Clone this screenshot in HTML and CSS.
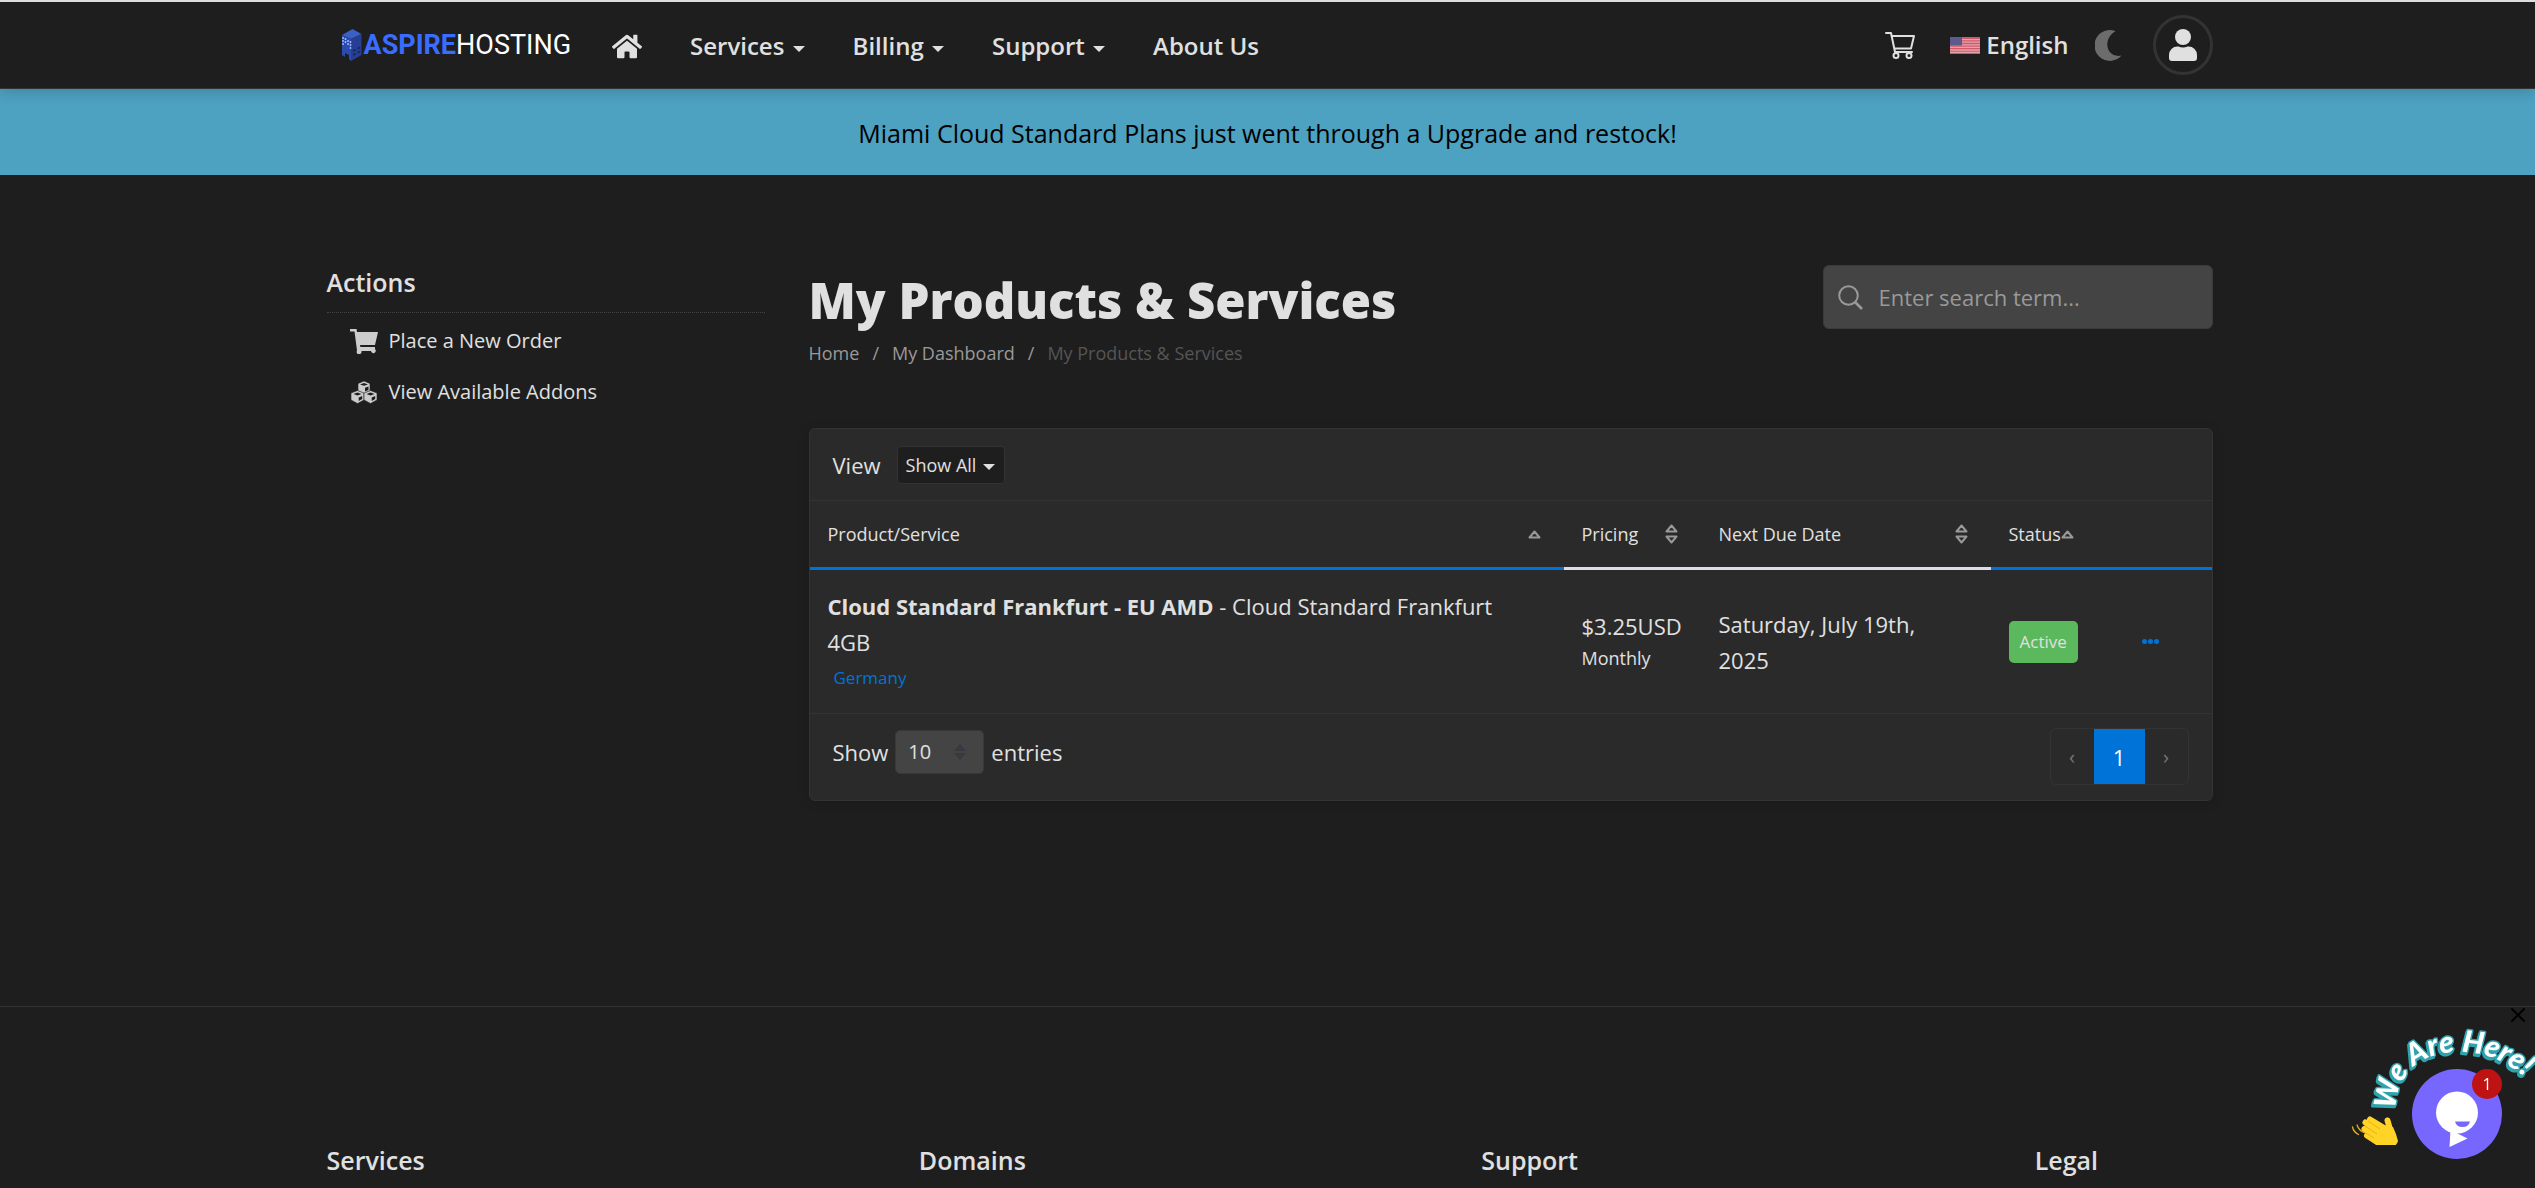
FILE: index.html
```html
<!DOCTYPE html>
<html lang="en">
<head>
  <meta charset="UTF-8" />
  <meta name="viewport" content="width=device-width, initial-scale=1.0" />
  <title>My Products &amp; Services - AspireHosting</title>
  <link rel="stylesheet" href="styles.css">
</head>
<body>
  <header class="navbar">
    <div class="container navbar-inner">
      <a class="logo" href="#">
        <svg class="logo-mark" viewBox="0 0 20 32" aria-hidden="true">
          <path fill="#3a60c8" d="M10.500 0 19.500 5 9 10 0 6z" />
          <path fill="#2b4bb0" d="M0 6 9 10V32L7 30V26L3 24V28L0 26z" />
          <path fill="#263f94" d="M9 10 19.500 5V26L9 32z" />
          <path stroke="#9fb6f2" stroke-width="1.500" stroke-dasharray="2 1" fill="none" d="M1 8v8M3.500 9v5M6 11v5M8.500 12v9" />
          <path stroke="#16265c" stroke-width="1.500" stroke-dasharray="3 2" fill="none" d="M11 22l8-4M11 26l8-4" />
        </svg>
        <span class="logo-blue">ASPIRE</span><span class="logo-white">HOSTING</span>
      </a>
      <nav class="main-nav">
        <a class="nav-home" href="#" aria-label="Home">
          <svg viewBox="0 0 576 512" width="30" height="27"><path fill="currentColor" d="M280.400 148.300 96 300.100V464a16 16 0 0 0 16 16l112-.300a16 16 0 0 0 16-16V368a16 16 0 0 1 16-16h64a16 16 0 0 1 16 16v95.600a16 16 0 0 0 16 16.100l112 .300a16 16 0 0 0 16-16V300L295.700 148.300a12.200 12.200 0 0 0-15.300 0zM571.600 251.500 488 182.600V44a12 12 0 0 0-12-12h-56a12 12 0 0 0-12 12v72.600L318.500 43a48 48 0 0 0-61 0L4.300 251.500a12 12 0 0 0-1.600 16.900l25.500 31a12 12 0 0 0 16.900 1.600l235.300-193.700a12.200 12.200 0 0 1 15.300 0L531 301a12 12 0 0 0 16.900-1.600l25.500-31a12 12 0 0 0-1.800-16.900z" /></svg>
        </a>
        <a href="#">Services <span class="caret"></span></a>
        <a href="#">Billing <span class="caret"></span></a>
        <a href="#">Support <span class="caret"></span></a>
        <a href="#">About Us</a>
      </nav>
      <div class="nav-tools">
        <a class="tool-cart" href="#" aria-label="Cart">
          <svg viewBox="0 0 30 28" width="30" height="28" fill="none" stroke="currentColor" stroke-width="2" stroke-linejoin="round" stroke-linecap="round"><path d="M1 2h5l4 19h17M7 5h22l-3 12.500H9.500" /><circle cx="11" cy="24.500" r="2.500" /><circle cx="24" cy="24.500" r="2.500" /></svg>
        </a>
        <a class="tool-lang" href="#">
          <svg viewBox="0 0 30 17" width="30" height="17" aria-hidden="true"><path fill="#cf5a6a" d="M0 0h30v17H0z" /><path stroke="#e6a3ac" stroke-width="1.300" d="M0 2.600h30M0 5.200h30M0 7.800h30M0 10.400h30M0 13h30M0 15.400h30" /><path fill="#5d5b8c" d="M0 0h12v8.500H0z" /></svg>
          English
        </a>
        <button class="tool-moon" type="button" aria-label="Toggle dark mode">
          <svg viewBox="0 0 27 31" width="27" height="31"><path fill="currentColor" d="M20.500 1.200A15.400 15.400 0 1 0 26.500 25.600C11 28.500 7 9 20.500 1.200z" /></svg>
        </button>
        <a class="avatar" href="#" aria-label="Account">
          <svg viewBox="0 0 28 32" width="28" height="32"><circle cx="14" cy="8" r="8" fill="currentColor" /><path fill="currentColor" d="M0 26a8.400 8.400 0 0 1 8.400-8.400h1q4.600 2 9.200 0h1A8.400 8.400 0 0 1 28 26v3a3 3 0 0 1-3 3H3a3 3 0 0 1-3-3z" /></svg>
        </a>
      </div>
    </div>
  </header>

  <div class="notice">Miami Cloud Standard Plans just went through a Upgrade and restock!</div>

  <div class="container layout">
    <aside class="sidebar">
      <h2>Actions</h2>
      <ul>
        <li><a href="#">
          <svg viewBox="0 0 28 25" width="28" height="25" aria-hidden="true"><path fill="currentColor" d="M0 0h6.500l.600 3H28l-3 13H10l.400 2H25v2.200h.200A2.400 2.400 0 1 1 21 22H11.500A2.500 2.500 0 1 1 7 21.500L4.500 2.500H0z" /></svg>
          Place a New Order</a></li>
        <li><a href="#">
          <svg viewBox="0 0 28 24" width="28" height="24" aria-hidden="true"><g fill="currentColor" stroke="#1e1e1e" stroke-width="0.600"><path d="M14 1l6 2.500v7.500l-6 3-6-3V3.500z" /><path d="M7.500 10.500l6.500 2.500V20l-6.500 3.500L1 20v-7z" /><path d="M20.500 10.500l6.500 2.500V20l-6.500 3.500L14 20v-7z" /></g><g fill="#1e1e1e"><path d="M14 3l4 1.400-4 1.400-4-1.400zM15 7.800l3.500-1.400v3.600L15 11.600zM7.500 12.600l4 1.400-4 1.400-4-1.400zM8.700 17.400l3.500-1.400v3L8.700 21zM20.500 12.600l4 1.400-4 1.400-4-1.400zM21.700 17.400l3.500-1.400v3l-3.500 2z" /></g></svg>
          View Available Addons</a></li>
      </ul>
    </aside>

    <main class="content">
      <div class="page-head">
        <div>
          <h1>My Products &amp; Services</h1>
          <ol class="breadcrumb">
            <li><a href="#">Home</a></li>
            <li><a href="#">My Dashboard</a></li>
            <li class="current">My Products &amp; Services</li>
          </ol>
        </div>
        <label class="search">
          <svg viewBox="0 0 25 25" width="25" height="25" aria-hidden="true" fill="none" stroke="currentColor" stroke-width="2"><circle cx="10.500" cy="10.500" r="9.300" /><path d="M17 17l7 7" stroke-width="2.600" /></svg>
          <input type="text" placeholder="Enter search term..." aria-label="Enter search term" />
        </label>
      </div>

      <section class="card">
        <div class="card-top">
          <span>View</span>
          <button type="button" class="filter">Show All <span class="caret"></span></button>
        </div>
        <table class="services">
          <colgroup>
            <col class="col-product" />
            <col class="col-price" />
            <col class="col-due" />
            <col class="col-status" />
            <col class="col-menu" />
          </colgroup>
          <thead>
            <tr>
              <th class="sorted"><div class="th-row">Product/Service
                <svg class="sort" viewBox="0 0 13 9"><path d="M6.500 1.500 11.500 7.500H1.500z" /></svg></div></th>
              <th><div class="th-row">Pricing
                <svg class="sort" viewBox="0 0 13 20"><path d="M6.500 1.500 11.500 7.500H1.500zM6.500 18.500 11.500 12.500H1.500z" /></svg></div></th>
              <th><div class="th-row">Next Due Date
                <svg class="sort" viewBox="0 0 13 20"><path d="M6.500 1.500 11.500 7.500H1.500zM6.500 18.500 11.500 12.500H1.500z" /></svg></div></th>
              <th class="sorted"><div class="th-row th-tight">Status
                <svg class="sort" viewBox="0 0 13 9"><path d="M6.500 1.500 11.500 7.500H1.500z" /></svg></div></th>
              <th class="sorted"></th>
            </tr>
          </thead>
          <tbody>
            <tr>
              <td><strong>Cloud Standard Frankfurt - EU AMD</strong> - Cloud Standard Frankfurt 4GB
                <a class="region" href="#">Germany</a></td>
              <td class="price">$3.25USD<small>Monthly</small></td>
              <td>Saturday, July 19th, 2025</td>
              <td class="status"><span class="badge">Active</span></td>
              <td><button type="button" class="dots" aria-label="Manage"><i></i><i></i><i></i></button></td>
            </tr>
          </tbody>
        </table>
        <div class="card-bottom">
          <label class="length">Show
            <span class="select-wrap">
              <select><option>10</option><option>25</option><option>50</option></select>
              <svg viewBox="0 0 12 16" width="12" height="16" aria-hidden="true"><path fill="#343a40" d="M6 0 12 7H0zM6 16 12 9H0z" /></svg>
            </span>
            entries</label>
          <nav class="pagination" aria-label="Pages">
            <button type="button" disabled>‹</button>
            <button type="button" class="active">1</button>
            <button type="button" disabled>›</button>
          </nav>
        </div>
      </section>
    </main>
  </div>

  <footer class="footer">
    <div class="container footer-cols">
      <h3>Services</h3>
      <h3>Domains</h3>
      <h3>Support</h3>
      <h3>Legal</h3>
    </div>
  </footer>

  <div class="chat">
    <button type="button" class="chat-close" aria-label="Close">
      <svg viewBox="0 0 14 14" width="14" height="14"><path d="M1 1l12 12M13 1 1 13" stroke="#000" stroke-width="2" stroke-linecap="round" /></svg>
    </button>
    <button type="button" class="chat-open" aria-label="Open chat">
      <svg viewBox="0 0 200 198" width="200" height="198">
        <defs>
          <path id="arc" d="M61 120C60 82 90 62 122 62C152 62 172 70 202 98" />
          <clipPath id="hand-clip"><path d="M20 120h50v35H20z" /></clipPath>
        </defs>
        <text class="arc-text"><textPath href="#arc">We Are Here!</textPath></text>
        <circle cx="122" cy="124" r="45" fill="#7767ff" />
        <circle cx="122" cy="122.500" r="21" fill="#fff" />
        <path fill="#fff" d="M115.500 140l-1 17 18-8.500z" />
        <path fill="#7767ff" d="M120 131.500h15q-1.500 5.500-7.500 5.500t-7.500-5.500z" />
        <circle cx="152" cy="94" r="15" fill="#bf1212" />
        <text class="chat-count" x="152" y="100" text-anchor="middle">1</text>
        <!-- waving hand -->
        <g clip-path="url(#hand-clip)">
          <path fill="none" stroke="#ffd426" stroke-width="6" stroke-linecap="round" d="M35 129.500l15 9M30.500 132.500l18 12M29.500 139l17 11M32 145.500l14 9M52.500 130.500l4 14" />
          <path fill="#ffd426" d="M36 132l15 4 7 1q3 6 5 14-2 7-11 7-9-1-16-7z" />
          <path fill="none" stroke="#e8b310" stroke-width="1" d="M33 131l12 8M30 136l12 8M31 143l8 5" />
        </g>
        <path fill="none" stroke="#e0b020" stroke-width="1.300" stroke-linecap="round" d="M22 135q2 6 8 8M17.500 137q1 5 6 7.500" />
      </svg>
    </button>
  </div>
</body>
</html>
```

FILE: styles.css
```css
* {
  box-sizing: border-box;
  margin: 0;
  padding: 0;
}

body {
  font-family: "Open Sans", "Noto Sans", sans-serif;
  font-size: 22px;
  line-height: 36px;
  background: #1e1e1e;
  color: #e0e0e0;
  min-height: 100vh;
  overflow: hidden;
}

a {
  color: inherit;
  text-decoration: none;
}

button,
input,
select {
  font: inherit;
  color: inherit;
  background: none;
  border: none;
}

ul,
ol {
  list-style: none;
}

svg {
  display: block;
  flex: none;
}

.container {
  max-width: 1892px;
  margin: 0 auto;
  padding: 0 1px 0 5px;
}

.caret {
  display: inline-block;
  border: 6px solid transparent;
  border-top-color: currentColor;
  border-bottom: 0;
  vertical-align: middle;
}

/* navbar */
.navbar {
  position: relative;
  border-top: 2px solid #dcdfe0;
  border-bottom: 1px solid #333;
  background: #1e1e1e;
  box-shadow: 0 4px 12px rgba(0, 0, 0, 0.15);
}

.navbar-inner {
  display: flex;
  align-items: center;
  height: 86px;
  font-size: 24px;
  font-weight: 600;
}

.logo {
  display: flex;
  align-items: center;
  margin-left: 15px;
  font-family: Roboto, sans-serif;
  font-size: 27px;
}

.logo-mark {
  width: 20px;
  height: 32px;
  margin-right: 2px;
}

.logo-blue {
  color: #3a6cff;
  font-weight: 700;
}

.logo-white {
  color: #fff;
  font-weight: 400;
}

.main-nav {
  display: flex;
  align-items: center;
  gap: 48px;
  margin-left: 41px;
  padding-top: 2px;
}

.main-nav .caret {
  margin-left: 2px;
}

.nav-tools {
  display: flex;
  align-items: center;
  margin-left: auto;
}

.tool-lang {
  display: flex;
  align-items: center;
  gap: 6px;
  margin: 0 26px 0 35px;
}

.tool-moon {
  color: #6c6c6c;
  margin-right: 31px;
}

.avatar {
  display: flex;
  align-items: center;
  justify-content: center;
  width: 60px;
  height: 60px;
  border: 3px solid #333;
  border-radius: 50%;
}

.notice {
  padding: 26px 16px 24px;
  background: #4da1c1;
  color: #000;
  font-size: 25px;
  text-align: center;
}

/* page */
.layout {
  display: flex;
  gap: 44px;
  padding-top: 90px;
  padding-bottom: 205px;
}

.sidebar {
  flex: 0 0 438px;
}

.sidebar h2 {
  padding-bottom: 12px;
  border-bottom: 1px dotted #444;
  font-size: 25px;
  line-height: 35px;
  font-weight: 600;
}

.sidebar ul {
  padding: 10px 0 0 23px;
}

.sidebar li {
  margin-bottom: 15px;
}

.sidebar a {
  display: flex;
  align-items: center;
  gap: 11px;
  font-size: 20px;
}

.sidebar svg {
  color: #ccc;
}

.content {
  flex: 1;
}

.page-head {
  display: flex;
  justify-content: space-between;
  align-items: flex-start;
  margin-bottom: 57px;
}

h1 {
  font-size: 49px;
  line-height: 70px;
  font-weight: 800;
}

.breadcrumb {
  display: flex;
  font-size: 18px;
  color: #999;
}

.breadcrumb li + li::before {
  content: "/";
  margin: 0 13px;
}

.breadcrumb .current {
  color: #555;
}

.breadcrumb .current::before {
  color: #999;
}

.search {
  display: flex;
  align-items: center;
  gap: 16px;
  width: 390px;
  height: 64px;
  padding: 0 14px;
  background: #444;
  border: 1px solid #3a3a3a;
  border-radius: 6px;
  color: #999;
}

.search input {
  flex: 1;
  min-width: 0;
  outline: none;
}

.search input::placeholder {
  color: #999;
}

.card {
  background: #2a2a2a;
  border: 1px solid #333;
  border-radius: 6px;
  box-shadow: 0 2px 12px rgba(0, 0, 0, 0.15);
}

.card-top {
  display: flex;
  align-items: center;
  gap: 16px;
  padding: 17px 23px 16px;
}

.filter {
  height: 38px;
  padding: 0 9px 0 8px;
  background: #1e1e1e;
  border: 1px solid #333;
  border-radius: 4px;
  font-size: 18px;
  line-height: 34px;
}

.filter .caret {
  margin-left: 2px;
}

.services {
  width: 100%;
  border-collapse: collapse;
  table-layout: fixed;
}

.col-price {
  width: 137px;
}

.col-due {
  width: 290px;
}

.col-status {
  width: 133px;
}

.col-menu {
  width: 88px;
}

.services th {
  height: 68px;
  padding: 0 23px 0 18px;
  border-top: 1px solid #333;
  border-bottom: 3px solid #dcdcec;
  font-size: 18px;
  font-weight: 400;
  text-align: left;
}

.services th.sorted {
  border-bottom-color: #0073d9;
}

.th-row {
  display: flex;
  align-items: center;
  justify-content: space-between;
  white-space: nowrap;
}

.th-tight {
  justify-content: flex-start;
}

.sort {
  width: 13px;
  fill: none;
  stroke: #999;
  stroke-width: 2;
  stroke-linejoin: round;
}

.services td {
  height: 145px;
  padding: 0 36px 0 18px;
  border-bottom: 1px solid #333;
  vertical-align: middle;
}

.services td.price,
.services td.status {
  padding-right: 0;
}

.services td.price {
  line-height: 32px;
}

.price small {
  display: block;
  font-size: 18px;
}

.region {
  display: block;
  padding-left: 6px;
  color: #0073d9;
  font-size: 17px;
}

.badge {
  display: inline-block;
  padding: 3px 11px;
  background: #5cb85c;
  border-radius: 5px;
  font-size: 17px;
  vertical-align: middle;
}

.dots {
  display: flex;
  gap: 1px;
}

.dots i {
  width: 5px;
  height: 5px;
  border-radius: 50%;
  background: #0073d9;
}

.card-bottom {
  display: flex;
  justify-content: space-between;
  align-items: flex-start;
  padding: 14px 23px 15px;
}

.length {
  display: flex;
  align-items: center;
  gap: 7px;
  padding-top: 2px;
}

.select-wrap {
  display: flex;
  align-items: center;
  width: 89px;
  height: 44px;
  padding: 0 17px 0 12px;
  background: #444;
  border: 1px solid #383838;
  border-radius: 5px;
  font-size: 20px;
}

.select-wrap select {
  flex: 1;
  appearance: none;
  outline: none;
}

.pagination {
  display: flex;
  align-items: stretch;
  height: 57px;
  border: 1px solid #333;
  border-radius: 6px;
}

.pagination button {
  width: 43px;
  color: #777;
  font-size: 20px;
}

.pagination .active {
  width: 51px;
  background: #0073d9;
  color: #fff;
  font-size: 22px;
}

/* footer */
.footer {
  border-top: 1px solid #333;
  padding-top: 135px;
}

.footer-cols {
  display: grid;
  grid-template-columns: 593fr 563fr 554fr 178fr;
}

.footer h3 {
  font-size: 25px;
  font-weight: 600;
}

/* chat bubble sits over the page corner */
.chat {
  position: fixed;
  right: 0;
  bottom: 0;
}

.chat-open {
  display: block;
  cursor: pointer;
}

.chat-close {
  position: absolute;
  top: 18px;
  right: 10px;
}

.arc-text {
  font-family: Lato, sans-serif;
  font-size: 30px;
  font-weight: 900;
  font-style: italic;
  fill: #fff;
  stroke: #2fa3ae;
  stroke-width: 3;
  stroke-linejoin: round;
  paint-order: stroke;
  filter: drop-shadow(-1px 2px 0 #2fa3ae);
}

.chat-count {
  fill: #fff;
  font-size: 16px;
}
```
